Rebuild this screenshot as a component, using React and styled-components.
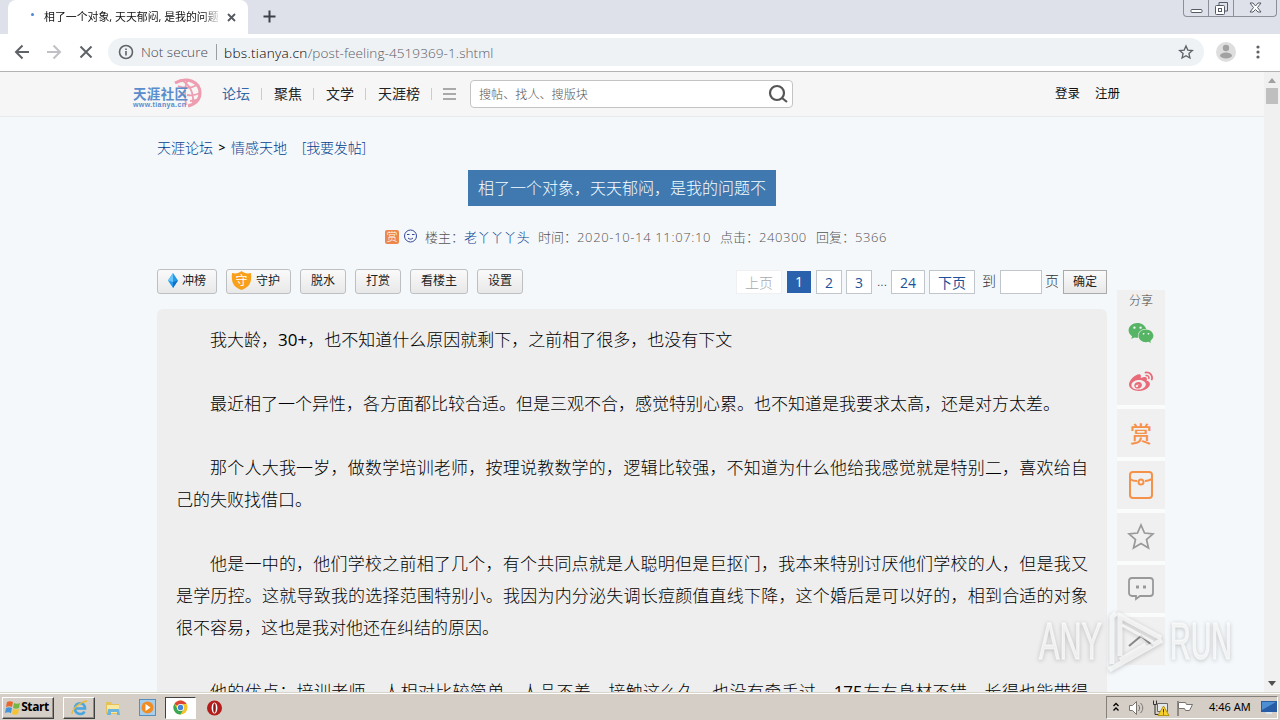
import React from 'react';
import styled, { createGlobalStyle, css } from 'styled-components';
import { FaWeixin, FaWeibo } from 'react-icons/fa';

const GlobalStyle = createGlobalStyle`
  * {
    box-sizing: border-box;
  }
  body {
    margin: 0;
    overflow: hidden;
    font-family: 'Open Sans', 'Noto Sans CJK SC', sans-serif;
    font-weight: 300;
    color: #111;
  }
  svg {
    display: block;
    flex: none;
  }
`;

const Screen = styled.div`
  position: relative;
  display: flex;
  flex-direction: column;
  width: 1280px;
  height: 720px;
  overflow: hidden;
  white-space: nowrap;
`;

/* browser chrome */

const TabStrip = styled.div`
  display: flex;
  height: 34px;
  padding-left: 8px;
  background: #dee1e9;
`;

const Tab = styled.div`
  display: flex;
  align-items: center;
  width: 240px;
  height: 34px;
  padding: 0 10px 0 22px;
  border-radius: 8px 8px 0 0;
  background: #fff;
`;

const LoadingDot = styled.i`
  width: 3px;
  height: 3px;
  margin: -6px 10px 0 1px;
  border-radius: 50%;
  background: #4a86d8;
`;

const TabTitle = styled.span`
  width: 176px;
  height: 18px;
  margin-right: 7px;
  overflow: hidden;
  font-size: 10.9px;
  font-weight: 400;
  line-height: 18px;
  mask-image: linear-gradient(to right, #000 158px, transparent 178px);
`;

const NewTab = styled.div`
  padding: 10px 0 0 15px;
`;

const WindowButtons = styled.div`
  display: flex;
  width: 94px;
  height: 17px;
  margin-left: auto;
  margin-right: 3px;
  border: 1px solid #8b8f99;
  border-top: 0;
  border-radius: 0 0 4px 4px;
`;

const WindowButton = styled.div`
  display: flex;
  align-items: center;
  justify-content: center;
  width: ${({ $width }) => $width}px;
  border-right: ${({ $last }) => ($last ? 0 : '1px solid #8b8f99')};
`;

const Toolbar = styled.div`
  display: flex;
  align-items: center;
  height: 38px;
  padding: 0 0 1px 14px;
  border-bottom: 1px solid #b3b3b3;
  background: #fff;
`;

const NavIcons = styled.div`
  display: flex;
  gap: 16px;
  margin-right: 14px;
`;

const AddressBar = styled.div`
  display: flex;
  align-items: center;
  width: 1096px;
  height: 28px;
  padding: 0 10px;
  border-radius: 14px;
  background: #eff2f5;
  font-size: 13.6px;
`;

const Security = styled.span`
  width: 76px;
  margin-left: 7px;
  padding-right: 8px;
  border-right: 1px solid #9a9da1;
  color: #45494e;
  line-height: 16px;
`;

const Address = styled.span`
  flex: 1;
  margin-left: 7px;
  color: #5c6065;
  letter-spacing: 0.05px;

  b {
    color: #000;
    font-weight: 300;
    letter-spacing: 0.3px;
  }
`;

const Avatar = styled.div`
  margin: 0 20px 0 12px;
`;

/* page */

const Viewport = styled.div`
  display: flex;
  height: 620px;
  background: #f4f8fb;
`;

const Page = styled.div`
  width: 1264px;
  overflow: hidden;
`;

const SiteHeader = styled.header`
  display: flex;
  align-items: center;
  height: 45px;
  padding-left: 132px;
  border-bottom: 1px solid #e6ebeb;
  background: #f6f6f6;
`;

const SiteNav = styled.nav`
  display: flex;
  align-items: center;
  margin-left: 6px;
  font-size: 14px;
`;

const NavLink = styled.a`
  padding: 0 11px 0 12px;
  border-right: 1px solid #ccc;
  color: ${({ $active }) => ($active ? '#2f67a8' : '#222')};
  font-weight: 400;
  line-height: 12px;
`;

const SearchBox = styled.div`
  display: flex;
  align-items: center;
  justify-content: space-between;
  width: 323px;
  height: 28px;
  margin-left: 14px;
  padding: 0 4px 0 8px;
  border: 1px solid #c4c4c4;
  border-radius: 4px;
  background: #fff;
  color: #555;
  font-size: 12.1px;
`;

const Account = styled.div`
  display: flex;
  gap: 15px;
  margin: -3px 0 0 262px;
  font-size: 12.5px;
  font-weight: 400;
`;

const Columns = styled.div`
  display: flex;
  align-items: flex-start;
  padding-left: 157px;
`;

const Main = styled.main`
  display: flex;
  flex-direction: column;
  width: 950px;
`;

const Breadcrumb = styled.div`
  display: flex;
  height: 20px;
  margin-top: 21px;
  color: #003f8f;
  font-size: 14px;
  line-height: 20px;

  i {
    width: 18px;
    color: #000;
    font-style: normal;
    font-size: 12px;
    font-weight: 600;
    text-align: center;
  }
`;

const PostLink = styled.a`
  margin-left: 15px;
  letter-spacing: -0.2px;
`;

const Title = styled.h1`
  width: 308px;
  height: 36px;
  margin: 12px 0 0 311px;
  padding-left: 10px;
  background: #4078b0;
  color: #f4fdff;
  font-size: 16px;
  font-weight: 300;
  line-height: 36px;
`;

const Meta = styled.div`
  display: flex;
  align-items: center;
  height: 20px;
  margin: 20px 0 0 228px;
  color: #555;
  font-size: 13px;
`;

const RewardBadge = styled.span`
  width: 14px;
  height: 14px;
  margin: 2px 5px 0 0;
  border-radius: 2px;
  background: #ec884c;
  color: #fff;
  font-size: 11px;
  line-height: 13px;
  text-align: center;
`;

const MetaField = styled.span`
  width: ${({ $width }) => $width}px;

  a {
    color: #003f8f;
    letter-spacing: 0.2px;
  }
  em {
    font-style: normal;
    letter-spacing: ${({ $spacing = 0.55 }) => $spacing}px;
  }
`;

const Controls = styled.div`
  display: flex;
  justify-content: space-between;
  height: 26px;
  margin-top: 23px;
`;

const ButtonGroup = styled.div`
  display: flex;
  gap: 9px;
`;

const buttonFace = css`
  display: flex;
  align-items: center;
  justify-content: center;
  border: 1px solid #bcc0c2;
  background: linear-gradient(#fafafa, #e8e8e8);
  color: #222;
  font: inherit;
  font-size: 12px;
  font-weight: 400;
  line-height: 20px;
`;

const ToolButton = styled.button`
  ${buttonFace}
  gap: 4px;
  width: ${({ $width }) => $width}px;
  height: 25px;
  padding: 0 ${({ $shift = 0 }) => $shift}px 2px 0;
  border-radius: 3px;
`;

const Pager = styled.div`
  display: flex;
  align-items: flex-start;
  padding-top: 1px;
  color: #333;
  font-size: 14px;
  line-height: 22px;
`;

const PageLink = styled.a`
  width: ${({ $width }) => $width}px;
  height: 24px;
  margin-right: ${({ $gap = 4 }) => $gap}px;
  border: 1px solid ${({ $muted }) => ($muted ? '#eef0f1' : '#c0c6cb')};
  background: #fff;
  color: ${({ $muted }) => ($muted ? '#aaa' : '#1c5299')};
  font-weight: ${({ $muted }) => ($muted ? 300 : 400)};
  text-align: center;
  line-height: 23px;
`;

const CurrentPage = styled.span`
  width: 24px;
  height: 22px;
  margin: 1px 5px 0 0;
  background: #2961ad;
  color: #fff;
  font-weight: 400;
  text-align: center;
  line-height: 22px;
`;

const PagerText = styled.span`
  width: ${({ $width }) => $width}px;
`;

const PageInput = styled.input`
  width: 42px;
  height: 24px;
  margin-right: 3px;
  border: 1px solid #c0c6cb;
  background: #fff;
`;

const GoButton = styled.button`
  ${buttonFace}
  width: 44px;
  height: 24px;
  padding: 0;
  border-color: #aaa;
`;

const Post = styled.article`
  height: 420px;
  margin-top: 14px;
  padding: 15px 19px;
  border-radius: 6px 6px 0 0;
  background: #eee;
  color: #000;
  font-size: 17px;
  line-height: 32px;
  white-space: normal;
`;

const Paragraph = styled.p`
  margin: 0 0 32px;
  text-align: justify;
  text-align-last: ${({ $full }) => ($full ? 'justify' : 'auto')};
  text-indent: 34px;

  span {
    font-weight: 400;
  }
`;

const Sidebar = styled.aside`
  display: flex;
  flex-direction: column;
  gap: 4px;
  margin: 173px 0 0 10px;
  background: #fafbfb;
`;

const SideItem = styled.div`
  display: flex;
  align-items: center;
  justify-content: center;
  width: 48px;
  height: 48px;
  background: #f0f0f0;
`;

const Share = styled.div`
  display: flex;
  flex-direction: column;
  align-items: center;
  height: 115px;
  background: #f0f0f0;
  color: #444;
  font-size: 12px;
  line-height: 22px;

  svg {
    margin-top: 8px;
  }
  svg:last-child {
    margin-top: 24px;
  }
`;

const Reward = styled.span`
  color: #f5924a;
  font-size: 22px;
  font-weight: 500;
  line-height: 48px;
`;

const Scrollbar = styled.div`
  display: flex;
  flex-direction: column;
  align-items: center;
  width: 16px;
  padding: 6px 0;
  background: #f0f0f0;
`;

const Thumb = styled.i`
  flex: 0 0 16px;
  width: 12px;
  margin: 5px 0 auto;
  background: #bfbfbf;
`;

/* Windows taskbar */

const Taskbar = styled.footer`
  display: flex;
  align-items: center;
  height: 28px;
  padding: 2px 0 0 2px;
  border-top: 1px solid #d9d5cb;
  background: #d5cec6;
  box-shadow: inset 0 1px #fff;
`;

const TaskButton = styled.div`
  display: flex;
  align-items: center;
  justify-content: center;
  width: ${({ $width }) => $width}px;
  height: 22px;
  border: 1px solid;
  border-color: ${({ $pressed }) => ($pressed ? '#404040 #fff #fff #404040' : '#fff #404040 #404040 #fff')};
  background: ${({ $pressed }) => ($pressed ? '#fff' : 'transparent')};
  box-shadow: ${({ $pressed }) => ($pressed ? 'none' : 'inset -1px -1px #928d86')};
`;

const StartLabel = styled.b`
  margin: 0 2px 2px 0;
  color: #000;
  font-size: 12px;
  font-weight: 700;
  letter-spacing: -0.4px;
`;

const QuickLaunch = styled.div`
  display: flex;
  align-items: center;
  margin-left: 9px;
`;

const QuickIcon = styled.div`
  display: flex;
  justify-content: center;
  width: ${({ $width }) => $width}px;
`;

const Tray = styled.div`
  display: flex;
  align-items: center;
  width: 172px;
  height: 23px;
  margin: 0 2px 0 auto;
  padding-left: 5px;
  border: 1px solid;
  border-color: #85807a #fff #fff #85807a;
`;

const Clock = styled.span`
  width: 42px;
  margin: 0 10px 2px 15px;
  color: #000;
  font-family: 'Noto Sans', sans-serif;
  font-size: 11px;
  font-weight: 400;
`;

const Watermark = styled.svg`
  position: absolute;
  top: 603px;
  left: 1030px;
  filter: drop-shadow(0 1px 2px rgba(90, 90, 90, 0.45));
`;

const post = [
  '我大龄，30+，也不知道什么原因就剩下，之前相了很多，也没有下文',
  '最近相了一个异性，各方面都比较合适。但是三观不合，感觉特别心累。也不知道是我要求太高，还是对方太差。',
  '那个人大我一岁，做数学培训老师，按理说教数学的，逻辑比较强，不知道为什么他给我感觉就是特别二，喜欢给自己的失败找借口。',
  '他是一中的，他们学校之前相了几个，有个共同点就是人聪明但是巨抠门，我本来特别讨厌他们学校的人，但是我又是学历控。这就导致我的选择范围特别小。我因为内分泌失调长痘颜值直线下降，这个婚后是可以好的，相到合适的对象很不容易，这也是我对他还在纠结的原因。',
  '他的优点：培训老师，人相对比较简单，人品不差，接触这么久，也没有牵手过，175左右身材不错，长得也能带得',
];

const Stroke = ({ size, width = size, height = size, box = `0 0 ${width} ${height}`, color = '#5f6368', weight = 2, children }) => (
  <svg width={width} height={height} viewBox={box} fill="none" stroke={color} strokeWidth={weight}>
    {children}
  </svg>
);

const Logo = () => (
  <svg width="72" height="34" viewBox="0 0 72 34">
    <g fill="none" stroke="#ee9caf" strokeWidth="1.8">
      <path d="M43 6C55-1 68 5 68 16c0 7-5 11-12 13" strokeWidth="3" />
      <path d="M49 3c8 4 13 12 12 24M56 2c-3 5-4 12-2 26M46 9c8 3 14 2 19-1M55 18c5 1 9 0 13-2M58 24l7-1" />
    </g>
    <text x="1" y="22" fill="#5a8dcc" fontFamily="Noto Sans CJK SC" fontSize="13.5" fontWeight="700" textLength="55">
      天涯社区
    </text>
    <text x="1" y="30" fill="#5a8dcc" fontFamily="Liberation Sans" fontSize="7" fontWeight="700" textLength="53">
      www.tianya.cn
    </text>
  </svg>
);

const ChromeIcon = () => (
  <svg width="15" height="15" viewBox="0 0 16 16">
    <circle cx="8" cy="8" r="7.5" fill="#f5c32c" />
    <path d="M8 8 1.5 4.2A7.5 7.5 0 0 1 14.5 4.2H8z" fill="#dc4536" />
    <path d="M1.5 4.2A7.5 7.5 0 0 0 8 15.5L11 10H5z" fill="#3aa757" />
    <circle cx="8" cy="8" r="3.8" fill="#fff" />
    <circle cx="8" cy="8" r="2.9" fill="#4285d9" />
  </svg>
);

const App = () => (
  <>
    <GlobalStyle />
    <Screen>
      <TabStrip>
        <Tab>
          <LoadingDot />
          <TabTitle>相了一个对象, 天天郁闷, 是我的问题</TabTitle>
          <Stroke size={9} color="#55585d" weight={1.8}>
            <path d="m1 1 7 7M8 1 1 8" />
          </Stroke>
        </Tab>
        <NewTab>
          <Stroke size={13} color="#3c4048">
            <path d="M6.5.5v12M.5 6.5h12" />
          </Stroke>
        </NewTab>
        <WindowButtons>
          <WindowButton $width={25}>
            <Stroke width={13} height={13} color="#555b66" weight={1}>
              <rect x="1" y="7.5" width="11" height="3" rx="1" fill="#fff" />
            </Stroke>
          </WindowButton>
          <WindowButton $width={25}>
            <Stroke size={13} color="#555b66" weight={1}>
              <path d="M4 3V.5h8.5V9H9.5" />
              <rect x=".5" y="3.5" width="9" height="9" rx="1" fill="#fff" />
              <rect x="3.5" y="6.5" width="3" height="3" />
            </Stroke>
          </WindowButton>
          <WindowButton $width={42} $last>
            <Stroke width={13} height={12} color="#555b66" weight={1}>
              <path d="M1 1h3l2.5 3L9 1h3L8.5 5.5 12 10H9L6.5 7.5 4 10H1l3.5-4.5z" fill="#fff" />
            </Stroke>
          </WindowButton>
        </WindowButtons>
      </TabStrip>

      <Toolbar>
        <NavIcons>
          <Stroke size={16}>
            <path d="M15 8H2M8.5 1.5 2 8l6.5 6.5" />
          </Stroke>
          <Stroke size={16} color="#bfc1c4">
            <path d="M1 8h13M7.5 1.5 14 8l-6.5 6.5" />
          </Stroke>
          <Stroke size={16}>
            <path d="m2.5 2.5 11 11M13.5 2.5l-11 11" />
          </Stroke>
        </NavIcons>
        <AddressBar>
          <Stroke size={16} weight={1.6}>
            <circle cx="8" cy="8" r="6.5" />
            <path d="M8 7v4.5M8 4.5v1.6" />
          </Stroke>
          <Security>Not secure</Security>
          <Address>
            <b>bbs.tianya.cn</b>/post-feeling-4519369-1.shtml
          </Address>
          <Stroke size={16} box="0 0 24 24">
            <path d="m12 3 2.7 6.2 6.8.6-5.1 4.5 1.5 6.7-5.900-3.5L6.100 21l1.500-6.700-5.100-4.500 6.800-.6z" />
          </Stroke>
        </AddressBar>
        <Avatar>
          <svg width="20" height="20" viewBox="0 0 20 20">
            <circle cx="10" cy="10" r="10" fill="#dedede" />
            <circle cx="10" cy="6" r="3.2" fill="#a2a2a2" />
            <ellipse cx="10" cy="13.5" rx="6" ry="3" fill="#a2a2a2" />
          </svg>
        </Avatar>
        <svg width="4" height="16" fill="#5f6368">
          <circle cx="2" cy="3" r="1.6" />
          <circle cx="2" cy="8" r="1.6" />
          <circle cx="2" cy="13" r="1.6" />
        </svg>
      </Toolbar>

      <Viewport>
        <Page>
          <SiteHeader>
            <Logo />
            <SiteNav>
              <NavLink $active>论坛</NavLink>
              <NavLink>聚焦</NavLink>
              <NavLink>文学</NavLink>
              <NavLink>天涯榜</NavLink>
            </SiteNav>
            <Stroke width={24} height={14} color="#aaa">
              <path d="M11 2h13M11 7h13M11 12h13" />
            </Stroke>
            <SearchBox>
              搜帖、找人、搜版块
              <Stroke size={20} color="#555" weight={2.2}>
                <circle cx="9" cy="9" r="7" />
                <path d="m14 14 5 4" />
              </Stroke>
            </SearchBox>
            <Account>
              <span>登录</span>
              <span>注册</span>
            </Account>
          </SiteHeader>

          <Columns>
            <Main>
              <Breadcrumb>
                <a>天涯论坛</a>
                <i>&gt;</i>
                <a>情感天地</a>
                <PostLink>[我要发帖]</PostLink>
              </Breadcrumb>
              <Title>相了一个对象，天天郁闷，是我的问题不</Title>
              <Meta>
                <RewardBadge>赏</RewardBadge>
                <Stroke width={21} height={14} color="#35479b" weight={1}>
                  <circle cx="6.5" cy="7" r="6" />
                  <path d="M3 5.5h2.5M8 5.5h2.5M4 9c1.500 1.500 3.500 1.500 5 0" />
                </Stroke>
                <MetaField $width={113}>
                  楼主：<a>老丫丫丫头</a>
                </MetaField>
                <MetaField $width={182} $spacing={0.65}>
                  时间：<em>2020-10-14 11:07:10</em>
                </MetaField>
                <MetaField $width={96}>
                  点击：<em>240300</em>
                </MetaField>
                <MetaField $width={80}>
                  回复：<em>5366</em>
                </MetaField>
              </Meta>

              <Controls>
                <ButtonGroup>
                  <ToolButton $width={60}>
                    <svg width="10" height="15" viewBox="0 0 10 15">
                      <path d="M5 0 0 7.5 5 15l5-7.5z" fill="#2599ea" />
                      <path d="M5 0 0 7.5 5 9z" fill="#69c8fa" />
                      <path d="M5 9v6l5-7.5z" fill="#176fc5" />
                    </svg>
                    冲榜
                  </ToolButton>
                  <ToolButton $width={65} $shift={6}>
                    <svg width="21" height="19" viewBox="0 0 21 19">
                      <path d="M1 2c4 1 7 0 9.500-2C13 2 16 3 20 2c1 9-1 14-9.500 17C2 16 0 11 1 2z" fill="#f9a01b" />
                      <text x="4.500" y="13.500" fill="#fff" fontFamily="Noto Sans CJK SC" fontSize="12">
                        守
                      </text>
                    </svg>
                    守护
                  </ToolButton>
                  <ToolButton $width={46}>脱水</ToolButton>
                  <ToolButton $width={46}>打赏</ToolButton>
                  <ToolButton $width={58}>看楼主</ToolButton>
                  <ToolButton $width={46}>设置</ToolButton>
                </ButtonGroup>
                <Pager>
                  <PageLink $width={46} $gap={5} $muted>
                    上页
                  </PageLink>
                  <CurrentPage>1</CurrentPage>
                  <PageLink $width={26}>2</PageLink>
                  <PageLink $width={26} $gap={5}>
                    3
                  </PageLink>
                  <PagerText $width={14}>...</PagerText>
                  <PageLink $width={34}>24</PageLink>
                  <PageLink $width={46} $gap={7}>
                    下页
                  </PageLink>
                  <PagerText $width={18}>到</PagerText>
                  <PageInput />
                  <PagerText $width={18}>页</PagerText>
                  <GoButton>确定</GoButton>
                </Pager>
              </Controls>

              <Post>
                {post.map((text, i) => (
                  <Paragraph key={text} $full={i === post.length - 1}>
                    {text.split(/([\d+]+)/).map((part) => (/^\d/.test(part) ? <span key={part}>{part}</span> : part))}
                  </Paragraph>
                ))}
              </Post>
            </Main>

            <Sidebar>
              <Share>
                分享
                <FaWeixin size={26} color="#55b565" />
                <FaWeibo size={24} color="#e96a78" />
              </Share>
              <SideItem>
                <Reward>赏</Reward>
              </SideItem>
              <SideItem>
                <Stroke width={24} height={28} color="#f5924a">
                  <rect x="1" y="1" width="22" height="26" rx="3" />
                  <path d="M1 8c3 2 5 2 7 2M16 10c3 0 5-1 7-2" />
                  <circle cx="12" cy="11" r="2.5" />
                </Stroke>
              </SideItem>
              <SideItem>
                <Stroke size={28} color="#999" weight={1.7}>
                  <path d="m14 2 3.500 8 8.500.8-6.500 5.700 2 8.500-7.500-4.500L6.500 25l2-8.500L2 10.800l8.500-.8z" />
                </Stroke>
              </SideItem>
              <SideItem>
                <Stroke width={26} height={24} color="#999" weight={1.8}>
                  <path d="M4 1h18a3 3 0 0 1 3 3v12a3 3 0 0 1-3 3H12l-4 3v-3H4a3 3 0 0 1-3-3V4a3 3 0 0 1 3-3z" />
                  <path d="M8 10h3M15 10h3" strokeWidth="3" />
                </Stroke>
              </SideItem>
              <SideItem>
                <Stroke width={26} height={14} color="#888">
                  <path d="M1 12 13 2l12 10" />
                </Stroke>
              </SideItem>
            </Sidebar>
          </Columns>
        </Page>
        <Scrollbar>
          <svg width="8" height="5" fill="#a0a0a0">
            <path d="M4 0 8 5H0z" />
          </svg>
          <Thumb />
          <svg width="8" height="5" fill="#505050">
            <path d="M0 0h8L4 5z" />
          </svg>
        </Scrollbar>
      </Viewport>

      <Taskbar>
        <TaskButton $width={52}>
          <svg width="16" height="16" viewBox="0 0 16 16">
            <path d="M2 2c2-1 4-1 6 0L7 7C5 6 3 6 1 7z" fill="#e8672c" />
            <path d="M9 3c2 1 4 1 6 0l-1 5c-2 1-4 1-6 0z" fill="#74b843" />
            <path d="M1 8c2-1 4-1 6 0l-1 5c-2-1-4-1-6 0z" fill="#4394d8" />
            <path d="M8 9c2 1 4 1 6 0l-1 5c-2 1-4 1-6 0z" fill="#f5c32e" />
          </svg>
          <StartLabel>Start</StartLabel>
        </TaskButton>
        <QuickLaunch>
          <TaskButton $width={32}>
            <Stroke size={17} color="#4aa6df" weight={2.6}>
              <path d="M4 9.500h10c0-7-10-7-10 0 0 6 7.500 7 9.500 3" />
              <path d="M1 15C1 10 9 3 16 2" stroke="#e9bb3e" strokeWidth="1.4" />
            </Stroke>
          </TaskButton>
          <QuickIcon $width={35}>
            <svg width="16" height="16" viewBox="0 0 16 16">
              <path d="M1 2h5l1 2h7v10H1z" fill="#e4c259" />
              <path d="M2 5h12v8H2z" fill="#f8e8a0" />
              <path d="M3 9h11l1 6h-3v-3H6v3H2z" fill="#6eb5de" />
            </svg>
          </QuickIcon>
          <QuickIcon $width={35}>
            <svg width="17" height="17" viewBox="0 0 17 17">
              <rect x=".5" y=".5" width="16" height="16" fill="#a7cdec" stroke="#568fbf" />
              <circle cx="8.5" cy="8.5" r="6" fill="#f08c24" />
              <path d="m6.500 5 5 3.500-5 3.500z" fill="#fff" />
            </svg>
          </QuickIcon>
          <TaskButton $width={31} $pressed>
            <ChromeIcon />
          </TaskButton>
          <QuickIcon $width={36}>
            <svg width="15" height="16" viewBox="0 0 15 16">
              <circle cx="7.5" cy="8" r="7.5" fill="#b51c1c" />
              <ellipse cx="7.5" cy="8" rx="2.9" ry="5.5" fill="#fff" />
              <ellipse cx="7.5" cy="8" rx="1.3" ry="4.7" fill="#8f1414" />
            </svg>
          </QuickIcon>
        </QuickLaunch>
        <Tray>
          <Stroke width={8} height={14} color="#000" weight={1.3}>
            <path d="m1.500 5 2.500-2.500L6.500 5M1.500 9.500 4 7l2.500 2.500" />
          </Stroke>
          <svg width="74" height="18" viewBox="0 0 74 18" fill="none" stroke="#77736e">
            <path d="M9.500 6.500h3l4-4v13l-4-4h-3z" fill="#fff" />
            <path d="M18.500 6c1.500 2 1.500 4 0 6M20.500 4c3 3 3 7 0 10" />
            <path d="M37.500 4.500h10v8h-10z" fill="#e5e8ea" stroke="#666" />
            <path d="M33.500 1.500v4h3v-4M35 5.500v10h5" stroke="#333" />
            <path d="m43.500 7 5.500 9.500H38z" fill="#f8d12f" stroke="#b89510" />
            <path d="M43.500 10v3.500M43.500 14.500v1" stroke="#333" />
            <path d="M58 2v15" strokeWidth="1.5" />
            <path d="M58.500 3.500h7l1 2h6l-3 6h-4l-1-2h-6z" fill="#fff" />
          </svg>
          <Clock>4:46 AM</Clock>
          <svg width="16" height="15" viewBox="0 0 16 15">
            <path d="M0 1h16v11H0z" fill="#285ca5" />
            <path d="M1 2h14L1 10z" fill="#4c8fd2" />
            <path d="M5 12h6v2H5z" fill="#dce6ef" />
          </svg>
        </Tray>
      </Taskbar>

      <Watermark width="210" height="76" viewBox="0 0 210 76">
        <g
          fill="#fff"
          fillOpacity=".7"
          stroke="#fff"
          strokeOpacity=".5"
          strokeWidth="1.5"
          fontFamily="Liberation Sans"
          fontSize="52"
        >
          <text x="9" y="56" textLength="63" lengthAdjust="spacingAndGlyphs">
            ANY
          </text>
          <text x="140" y="56" textLength="62" lengthAdjust="spacingAndGlyphs">
            RUN
          </text>
        </g>
        <g fill="none" stroke="#fff" strokeOpacity=".7" strokeWidth="5">
          <path d="M82 61V14l4-4" />
          <path d="M90 53V13l41 22M79 67l53-30M90 57l26-15" />
          <path d="M92 22l31 17" strokeWidth="3" />
        </g>
      </Watermark>
    </Screen>
  </>
);

export default App;
